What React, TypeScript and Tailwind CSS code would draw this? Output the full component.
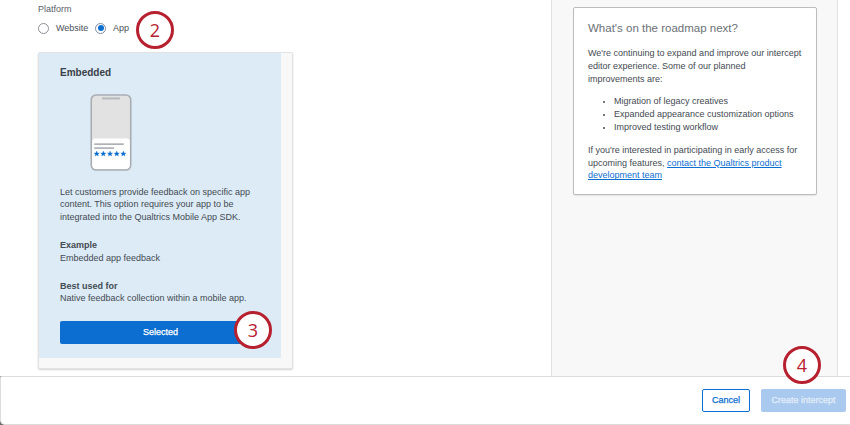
import React from "react";

const Callout = ({ n, className }: { n: number; className: string }) => (
  <div
    className={`absolute flex h-[38px] w-[38px] items-center justify-center rounded-full border-[3px] border-[#b7202e] bg-white font-['Open_Sans',sans-serif] text-[18px] font-medium text-[#b7202e] ${className}`}
  >
    {n}
  </div>
);

const PhoneIllustration = () => (
  <svg width="42" height="77" viewBox="0 0 42 78" className="block">
    <rect x="1" y="1" width="40" height="76" rx="5" fill="#e2e2e2" stroke="#a9adb2" strokeWidth="1.6" />
    <rect x="12" y="3.5" width="18" height="2" fill="#b5b8bc" />
    <path d="M2 48a3 3 0 0 1 3-3h32a3 3 0 0 1 3 3v24a4 4 0 0 1-4 4H6a4 4 0 0 1-4-4z" fill="#fff" />
    <rect x="4" y="50" width="30" height="1.6" fill="#a9adb2" />
    <rect x="4" y="54" width="20" height="1.6" fill="#a9adb2" />
    {[6.5, 13.2, 20, 26.8, 33.5].map((cx) => (
      <polygon
        key={cx}
        transform={`translate(${cx} 60.5) scale(0.95)`}
        points="0,-2.8 0.85,-0.9 2.8,-0.8 1.3,0.5 1.8,2.5 0,1.4 -1.8,2.5 -1.3,0.5 -2.8,-0.8 -0.85,-0.9"
        fill="#0b6ed0"
        stroke="#0b6ed0"
        strokeWidth="0.3"
      />
    ))}
  </svg>
);

const App = () => {
  return (
    <div className="relative flex h-[425px] w-[850px] flex-col overflow-hidden bg-white font-['Liberation_Sans',sans-serif] text-[9px] leading-[12.8px] text-[#444a52]">
      <div className="flex h-[376px] shrink-0">
        {/* Left column */}
        <div className="w-[551px] shrink-0 pl-[38px]">
          <div className="pt-[3px] text-[#5a6068]">Platform</div>
          <div className="mt-[6px] flex items-center text-[#4a5058]">
            <span className="h-[11px] w-[11px] rounded-full border border-[#8c9096] bg-white" />
            <span className="ml-[7px] w-[32px]">Website</span>
            <span className="ml-[7px] flex h-[11px] w-[11px] items-center justify-center rounded-full border border-[#7f8fa3] bg-white">
              <span className="h-[6px] w-[6px] rounded-full bg-[#0b6ed0]" />
            </span>
            <span className="ml-[7px]">App</span>
          </div>

          {/* Embedded card */}
          <div className="mt-[17px] h-[317px] w-[255px] rounded-[2px] border border-[#e2e2e2] bg-[#f8f8f8] shadow-[0_1px_2px_rgba(0,0,0,0.18)]">
            <div className="h-[305px] w-[242px] bg-[#dcebf6] pl-[21px] pr-[20px] pt-[13px]">
              <h3 className="text-[10px] font-bold leading-[14px] text-[#3a4048]">Embedded</h3>
              <div className="ml-[30px] mt-[14px]">
                <PhoneIllustration />
              </div>
              <p className="mt-[15px]">
                Let customers provide feedback on specific app content. This option requires your app to be integrated
                into the Qualtrics Mobile App SDK.
              </p>
              <p className="mt-[15px] font-bold">Example</p>
              <p>Embedded app feedback</p>
              <p className="mt-[15px] font-bold">Best used for</p>
              <p>Native feedback collection within a mobile app.</p>
              <button className="mt-[16px] h-[23px] w-[201px] rounded-[2px] bg-[#0b6ed0] text-[9px] text-white [-webkit-text-stroke:0.25px_white]">
                Selected
              </button>
            </div>
          </div>
        </div>

        {/* Right column */}
        <div className="h-full w-[287px] shrink-0 border-x border-[#e2e2e2] bg-[#f8f8f8] pl-[21px] pt-[7px]">
          <div className="h-[188px] w-[244px] rounded-[2px] border border-[#bcbcbc] bg-white pl-[14px] pr-[13px] pt-[13px] shadow-[0_1px_1px_rgba(0,0,0,0.08)]">
            <h3 className="text-[11.5px] leading-[15px] text-[#6b7076]">What's on the roadmap next?</h3>
            <p className="mt-[11px]">
              We're continuing to expand and improve our intercept editor experience. Some of our planned improvements
              are:
            </p>
            <ul className="my-[10px] list-disc pl-[26px] marker:text-[8px]">
              <li>Migration of legacy creatives</li>
              <li>Expanded appearance customization options</li>
              <li>Improved testing workflow</li>
            </ul>
            <p>
              If you're interested in participating in early access for upcoming features,{" "}
              <a className="text-[#0b6ed0] underline">contact the Qualtrics product development team</a>
            </p>
          </div>
        </div>
      </div>

      {/* Footer */}
      <div className="h-[49px] bg-[#6b6b6b]">
        <div className="flex h-full items-center justify-end gap-[11px] rounded-bl-[5px] rounded-tl-[2px] border-y border-l border-[#dcdcdc] bg-white pb-[1px] pr-[4px]">
          <button className="h-[23px] w-[48px] rounded-[2px] border border-[#0b6ed0] bg-white text-[9px] text-[#0b6ed0] [-webkit-text-stroke:0.25px_#0b6ed0]">
            Cancel
          </button>
          <button className="h-[23px] w-[85px] rounded-[2px] bg-[#a9c9ee] text-[9px] text-[#e4eefa] [-webkit-text-stroke:0.25px_#e4eefa]">
            Create intercept
          </button>
        </div>
      </div>

      <Callout n={2} className="left-[136px] top-[11px]" />
      <Callout n={3} className="left-[234px] top-[311px]" />
      <Callout n={4} className="left-[783px] top-[346px]" />
    </div>
  );
};

export default App;
